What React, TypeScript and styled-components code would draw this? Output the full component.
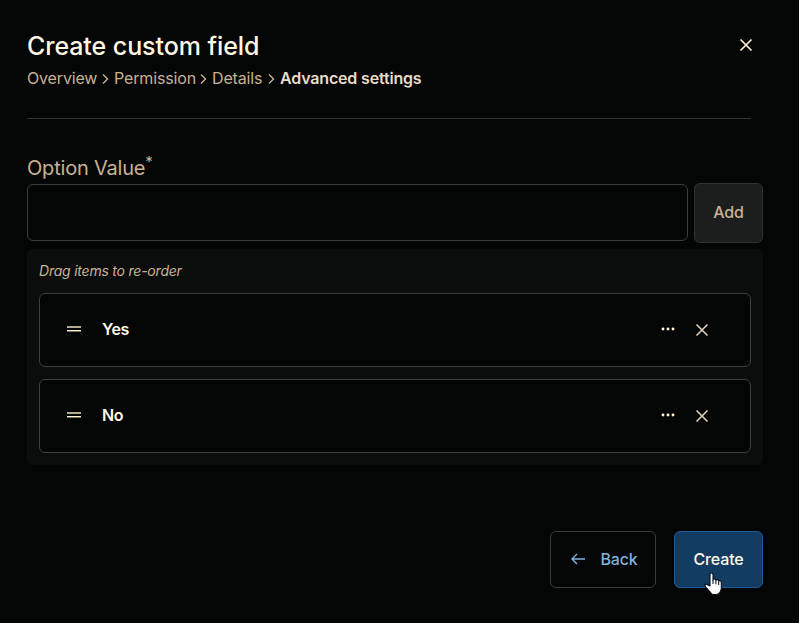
import React from "react";
import styled, { createGlobalStyle } from "styled-components";

const GlobalStyle = createGlobalStyle`
  * { box-sizing: border-box; }
  body { margin: 0; background: #040605; }
  button, input { font: inherit; letter-spacing: inherit; }
`;

const Dialog = styled.main`
  display: flex;
  flex-direction: column;
  width: 799px;
  height: 623px;
  padding: 30px 36px 0 27px;
  overflow: hidden;
  background: #040605;
  color: #c8b294;
  font: 400 16px/24px Inter, "Liberation Sans", sans-serif;
  letter-spacing: -0.15px;
`;

const Header = styled.header`
  display: flex;
  justify-content: space-between;
  height: 89px;
  margin-right: 12px;
  border-bottom: 1px solid #333535;
`;

const Title = styled.h1`
  margin: 0;
  color: #fff8e7;
  font-size: 25px;
  font-weight: 550;
  letter-spacing: -0.07px;
  line-height: 32px;
`;

const Crumbs = styled.nav`
  display: flex;
  align-items: center;
  height: 24px;
  margin-top: 4px;
  white-space: nowrap;
`;

const Crumb = styled.span<{ $current?: boolean; $width: number }>`
  width: ${(p) => p.$width}px;
  color: ${(p) => (p.$current ? "#e9dcc6" : "#c8b294")};
  font-weight: ${(p) => (p.$current ? 600 : 400)};
  letter-spacing: ${(p) => (p.$current ? -0.17 : -0.15)}px;
`;

const ChevronIcon = styled.svg`
  width: 7px;
  height: 12px;
  margin: 1px 5px 0;
  fill: none;
  stroke: #c8b294;
  stroke-width: 1.4;
`;

const IconButton = styled.button<{ $bright?: boolean }>`
  display: grid;
  place-items: center;
  width: 34px;
  height: 34px;
  padding: 0;
  border: 0;
  background: none;
  color: ${(p) => (p.$bright ? "#fff3d8" : "#e6d7bb")};
`;

const CloseButton = styled(IconButton)`
  margin: -2px -12px 0 0;
`;

const Label = styled.label`
  height: 30px;
  margin-top: 34px;
  font-size: 20px;
  letter-spacing: -0.2px;
  line-height: 30px;
`;

const Required = styled.span`
  display: inline-block;
  font-size: 15px;
  line-height: 1;
  transform: translateY(-8px);
`;

const EntryRow = styled.div`
  display: flex;
  align-items: center;
  gap: 6px;
  height: 60px;
`;

const TextInput = styled.input`
  flex: 1;
  min-width: 0;
  height: 57px;
  margin-bottom: 1px;
  padding: 0 16px;
  border: 1px solid #3c3e3d;
  border-radius: 6px;
  background: #040605;
  color: #fff8e7;
`;

const Button = styled.button<{ $kind: "add" | "back" | "create" }>`
  display: flex;
  align-items: center;
  justify-content: center;
  flex: none;
  width: ${(p) => ({ add: 69, back: 106, create: 89 })[p.$kind]}px;
  height: ${(p) => (p.$kind === "add" ? 60 : 57)}px;
  padding: 0 0 2px ${(p) => (p.$kind === "back" ? 3 : 0)}px;
  border: 1px solid ${(p) => ({ add: "#303231", back: "#3a3c3b", create: "#1f5b93" })[p.$kind]};
  border-radius: 6px;
  background: ${(p) => ({ add: "#1c1e1d", back: "#040605", create: "#123c62" })[p.$kind]};
  color: ${(p) => ({ add: "#c8b294", back: "#7fb3dc", create: "#fff8e7" })[p.$kind]};
  font-weight: ${(p) => (p.$kind === "create" ? 550 : 500)};
`;

const OptionsPanel = styled.section`
  display: flex;
  flex-direction: column;
  gap: 12px;
  height: 216px;
  margin-top: 6px;
  padding: 12px;
  border-radius: 6px;
  background: #0b0d0c;
`;

const Hint = styled.p`
  height: 20px;
  margin: 0;
  font-size: 14px;
  font-style: italic;
  letter-spacing: -0.22px;
  line-height: 20px;
`;

const Option = styled.div`
  display: flex;
  align-items: center;
  height: 74px;
  padding: 0 31px 0 27px;
  border: 1px solid #3c3e3d;
  border-radius: 6px;
  background: #040605;
`;

const HandleIcon = styled.svg`
  width: 14px;
  height: 8px;
  margin: 0 21px 2px 0;
`;

const OptionName = styled.span`
  flex: 1;
  color: #fff8e7;
  font-weight: 600;
  letter-spacing: -0.35px;
  margin-top: -3px;
`;

const Footer = styled.footer`
  display: flex;
  justify-content: flex-end;
  gap: 18px;
  margin-top: 66px;
`;

const BackIcon = styled.svg`
  width: 14px;
  height: 12px;
  margin: 0 15px 0 0;
  fill: none;
  stroke: currentColor;
  stroke-width: 1.4;
`;

const CreateWrap = styled.div`
  position: relative;
`;

const Pointer = styled.svg`
  position: absolute;
  left: 30px;
  top: 41px;
  width: 19px;
  height: 24px;
`;

const CrossIcon = ({ weight = 1.5 }: { weight?: number }) => (
  <svg width="14" height="14" viewBox="0 0 14 14" fill="none" stroke="currentColor" strokeWidth={weight}>
    <path d="M1.5 1.5 12.5 12.5M12.5 1.5 1.5 12.5" />
  </svg>
);

const Separator = () => (
  <ChevronIcon viewBox="0 0 7 12"><path d="m1 1.5 4.5 4.5L1 10.5" /></ChevronIcon>
);

const OptionRow = ({ name }: { name: string }) => (
  <Option>
    <HandleIcon viewBox="0 0 14 8">
      <path fill="#b5aa92" d="M0 1h14v2H0z" />
      <path fill="#fff0d2" d="M0 5h14v1H0z" />
      <path fill="#776f5f" d="M0 6h14v1H0z" />
    </HandleIcon>
    <OptionName>{name}</OptionName>
    <IconButton $bright aria-label={`More for ${name}`}>
      <svg width="14" height="14" viewBox="0 0 14 14" fill="currentColor">
        <circle cx="2" cy="6" r="1.45" /><circle cx="7" cy="6" r="1.45" /><circle cx="12" cy="6" r="1.45" />
      </svg>
    </IconButton>
    <IconButton aria-label={`Remove ${name}`}><CrossIcon /></IconButton>
  </Option>
);

export default function App() {
  return (
    <>
      <GlobalStyle />
      <Dialog>
        <Header>
          <div>
            <Title>Create custom field</Title>
            <Crumbs>
              <Crumb $width={70}>Overview</Crumb><Separator />
              <Crumb $width={81}>Permission</Crumb><Separator />
              <Crumb $width={51}>Details</Crumb><Separator />
              <Crumb $current $width={141}>Advanced settings</Crumb>
            </Crumbs>
          </div>
          <CloseButton $bright aria-label="Close"><CrossIcon weight={1.7} /></CloseButton>
        </Header>
        <Label htmlFor="option-value">Option Value<Required>*</Required></Label>
        <EntryRow>
          <TextInput id="option-value" />
          <Button $kind="add">Add</Button>
        </EntryRow>
        <OptionsPanel>
          <Hint>Drag items to re-order</Hint>
          <OptionRow name="Yes" />
          <OptionRow name="No" />
        </OptionsPanel>
        <Footer>
          <Button $kind="back">
            <BackIcon viewBox="0 0 14 12"><path d="M14 6H1M6 1 1 6l5 5" /></BackIcon>
            Back
          </Button>
          <CreateWrap>
            <Button $kind="create">Create</Button>
            <Pointer viewBox="0 0 19 24">
              <path
                fill="#fff"
                stroke="#080b18"
                strokeWidth="1.1"
                strokeLinejoin="round"
                d="M6 14V2.8C6 .4 9 .4 9 2.8V8c.3-1.7 2.8-1.5 2.9.3.6-1.2 2.7-.8 2.8.8.9-.9 2.6-.2 2.6 1.2v6.2c0 1.5-.8 2.4-1.2 3.4-.8 1.8-2 2.6-4.1 2.6H9.8c-1.5 0-2.4-.7-3.1-1.8L1.5 14.8c-1.3-2 .7-3.3 2.2-2.1z"
              />
              <path stroke="#080b18" strokeWidth="1" d="M9 8v4M11.9 8.3v4M14.7 9.3V13" />
            </Pointer>
          </CreateWrap>
        </Footer>
      </Dialog>
    </>
  );
}
